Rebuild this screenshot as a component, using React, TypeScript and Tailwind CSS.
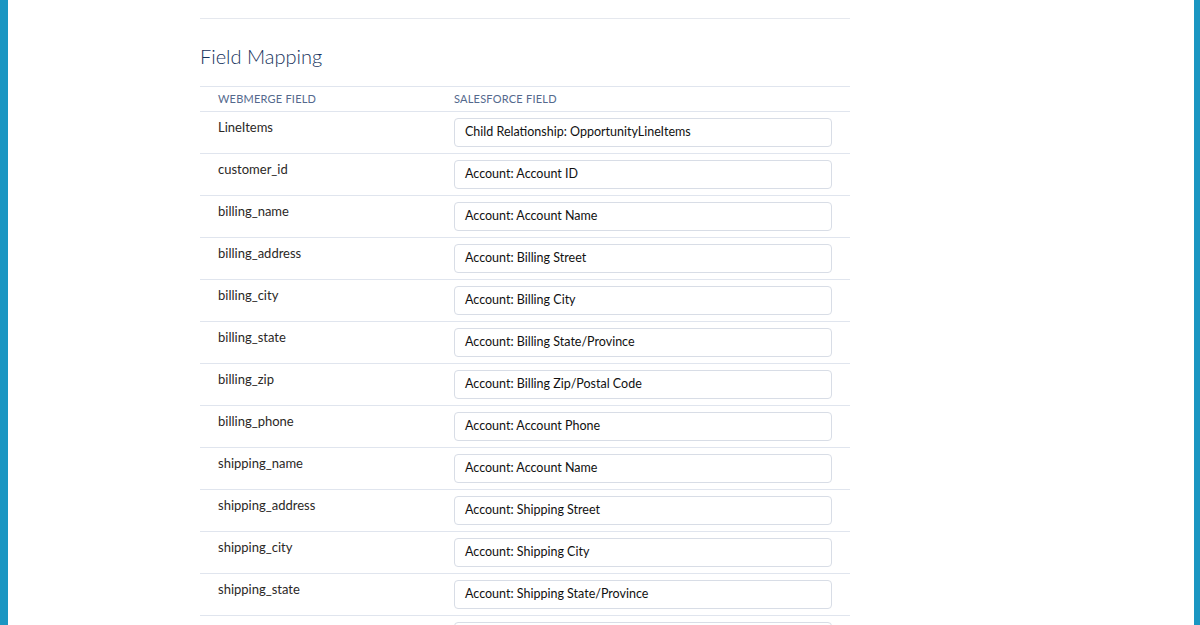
import React from "react";

const rows: [string, string][] = [
  ["LineItems", "Child Relationship: OpportunityLineItems"],
  ["customer_id", "Account: Account ID"],
  ["billing_name", "Account: Account Name"],
  ["billing_address", "Account: Billing Street"],
  ["billing_city", "Account: Billing City"],
  ["billing_state", "Account: Billing State/Province"],
  ["billing_zip", "Account: Billing Zip/Postal Code"],
  ["billing_phone", "Account: Account Phone"],
  ["shipping_name", "Account: Account Name"],
  ["shipping_address", "Account: Shipping Street"],
  ["shipping_city", "Account: Shipping City"],
  ["shipping_state", "Account: Shipping State/Province"],
  ["shipping_zip", "Account: Shipping Zip/Postal Code"],
];

export default function App() {
  return (
    <div
      className="flex h-[625px] w-[1200px] overflow-hidden bg-white text-[#2b2826]"
      style={{ fontFamily: "Lato, 'Noto Sans', sans-serif" }}
    >
      <div className="w-[8px] shrink-0 bg-[#1a96c2]" />
      <div className="flex-1 pl-[192px]">
        <div className="w-[650px]">
          <div className="h-[18px]" />
          <div className="border-t border-[#e5e8ee]" />
          <div className="flex h-[67px] items-center pt-[7px]">
            <h2 className="text-[20px] font-light leading-none text-[#16325c]">Field Mapping</h2>
          </div>
          <div className="flex h-[26px] items-center border-y border-[#e0e5ee] text-[11px] uppercase tracking-[0.02em] text-[#54698d]">
            <div className="w-[254px] pl-[18px]">Webmerge Field</div>
            <div>Salesforce Field</div>
          </div>
          {rows.map(([a, b]) => (
            <div key={a} className="flex h-[42px] border-b border-[#e0e5ee] text-[13px]">
              <div className="w-[254px] pl-[18px] pt-[6px] leading-[18px]">{a}</div>
              <div className="pt-[6px]">
                <div className="flex h-[29px] w-[378px] items-center rounded-[4px] border border-[#d8dde6] bg-white px-[10px] text-[12.5px] text-[#111111]">
                  {b}
                </div>
              </div>
            </div>
          ))}
        </div>
      </div>
      <div className="w-[6px] shrink-0 bg-[#1a96c2]" />
    </div>
  );
}
